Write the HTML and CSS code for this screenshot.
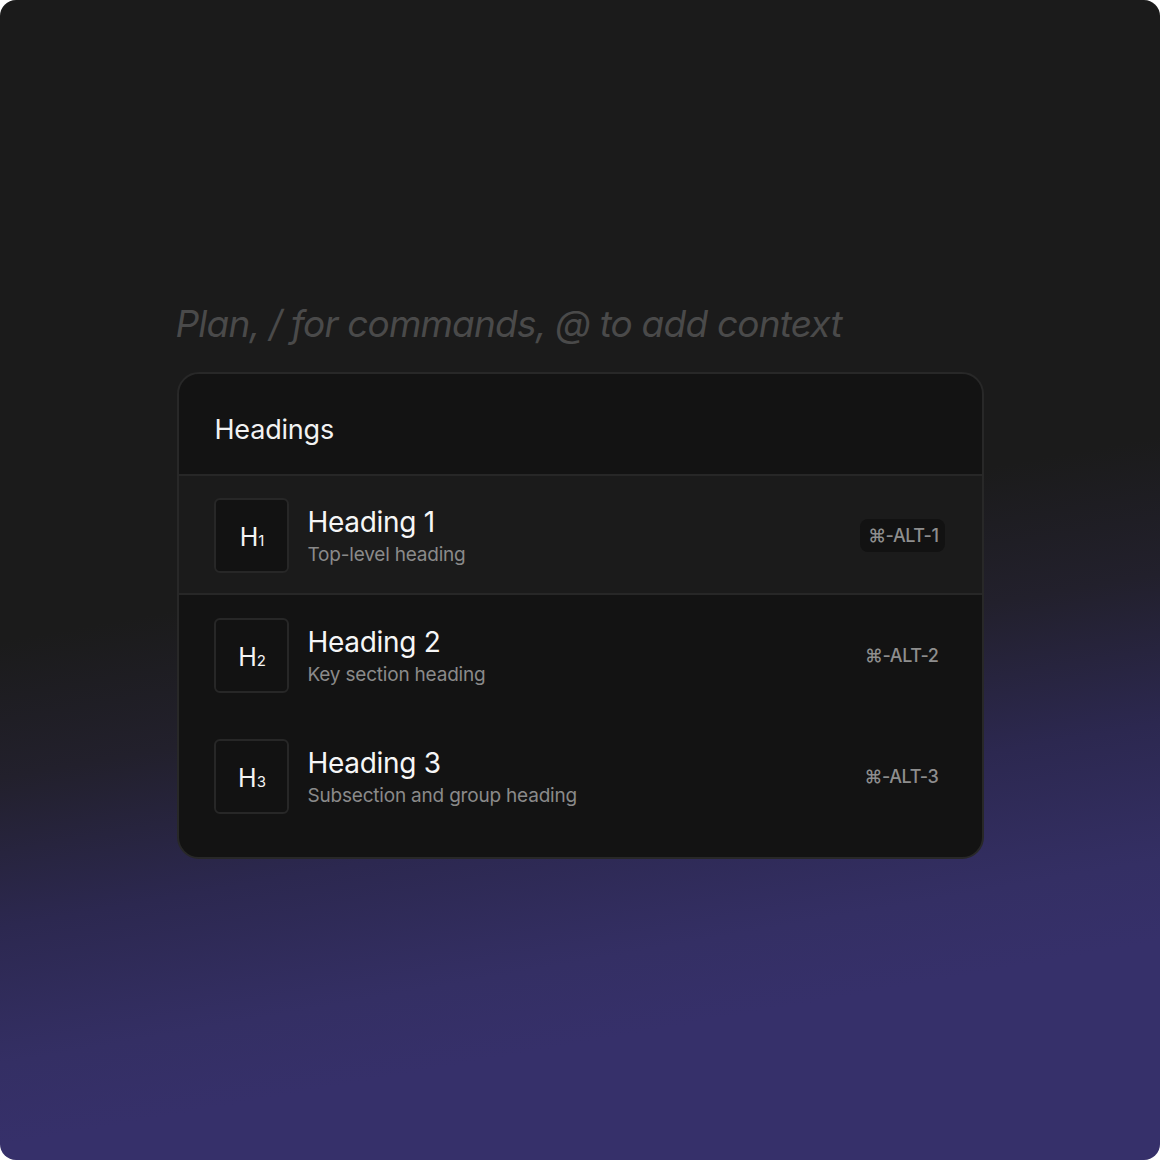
FILE: index.html
```html
<!DOCTYPE html>
<html>
<head>
<meta charset="utf-8">
<link rel="stylesheet" href="styles.css">
</head>
<body>
<div class="frame">
  <div class="editor">
    <div class="placeholder">Plan, / for commands, @ to add context</div>
    <div class="menu">
      <div class="menu-head">Headings</div>
      <div class="item active">
        <div class="icon">H<span class="sub">1</span></div>
        <div class="text">
          <div class="title">Heading 1</div>
          <div class="desc">Top-level heading</div>
        </div>
        <div class="kbd">⌘-ALT-1</div>
      </div>
      <div class="item">
        <div class="icon">H<span class="sub">2</span></div>
        <div class="text">
          <div class="title">Heading 2</div>
          <div class="desc">Key section heading</div>
        </div>
        <div class="kbd">⌘-ALT-2</div>
      </div>
      <div class="item">
        <div class="icon">H<span class="sub">3</span></div>
        <div class="text">
          <div class="title">Heading 3</div>
          <div class="desc">Subsection and group heading</div>
        </div>
        <div class="kbd">⌘-ALT-3</div>
      </div>
    </div>
  </div>
</div>
</body>
</html>
```
FILE: styles.css
```css
html, body {
  margin: 0;
  padding: 0;
  background: #ffffff;
}
body {
  font-family: Inter, "Noto Sans", sans-serif;
}
.frame {
  width: 1160px;
  height: 1160px;
  border-radius: 16px;
  overflow: hidden;
  background: linear-gradient(170deg, #1b1b1b 0%, #1b1b1b 47%, #22202c 57%, #2c2850 68%, #342f64 78%, #36306a 84%, #36306a 100%);
  display: flex;
  justify-content: center;
  box-sizing: border-box;
  padding-top: 300px;
}
.editor {
  width: 807px;
}
.placeholder {
  font-size: 37px;
  font-style: italic;
  color: #4a4a4a;
  letter-spacing: -0.8px;
  line-height: 48px;
  margin-left: -1px;
  margin-bottom: 24px;
}
.menu {
  background: #131313;
  border: 2px solid #282828;
  border-radius: 22px;
  overflow: hidden;
  padding-bottom: 20px;
}
.menu-head {
  height: 102px;
  box-sizing: border-box;
  padding-left: 36px;
  padding-top: 10px;
  display: flex;
  align-items: center;
  font-size: 27px;
  color: #f2f2f2;
  border-bottom: 2px solid #272727;
  letter-spacing: -0.2px;
}
.item {
  height: 121px;
  box-sizing: border-box;
  display: flex;
  align-items: center;
  padding: 0 37px 0 35px;
}
.item.active {
  background: #1b1b1b;
  border-bottom: 2px solid #272727;
  height: 119px;
  padding-top: 2px;
}
.icon {
  width: 75px;
  height: 75px;
  box-sizing: border-box;
  border: 2px solid #272727;
  border-radius: 6px;
  background: #121212;
  display: flex;
  align-items: center;
  justify-content: center;
  color: #f4f4f4;
  font-size: 25px;
  padding-top: 2px;
  padding-left: 2px;
}
.sub {
  font-size: 15px;
  margin-top: 8px;
}
.text {
  flex: 1;
  margin-left: 19px;
  display: flex;
  flex-direction: column;
}
.title {
  font-size: 28px;
  color: #f6f6f6;
  line-height: 34px;
  letter-spacing: -0.3px;
}
.desc {
  font-size: 19px;
  color: #8a8a8a;
  line-height: 24px;
  margin-top: 4px;
  letter-spacing: -0.2px;
}
.kbd {
  font-size: 18px;
  font-weight: 500;
  color: #8e8e8e;
  padding: 6px 6px 6px 8px;
  border-radius: 8px;
  letter-spacing: -0.4px;
}
.item.active .kbd {
  background: #121212;
}
```
